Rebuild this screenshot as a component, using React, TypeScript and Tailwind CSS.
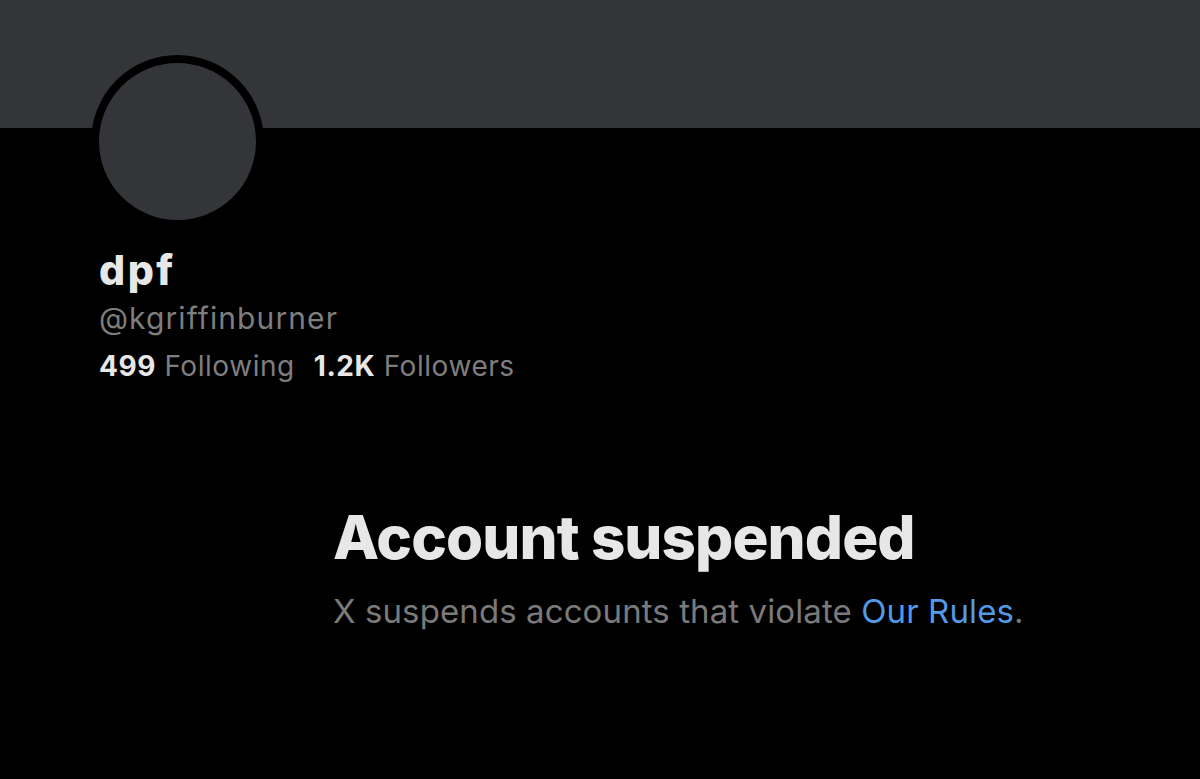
export default function App() {
  return (
    <div className="w-[1200px] h-[779px] bg-black overflow-hidden" style={{ fontFamily: "Inter, 'Noto Sans', sans-serif" }}>
      <div className="h-[128px] bg-[#343539]" />
      <div className="ml-[91px] -mt-[73px] w-[173px] h-[173px] rounded-full bg-[#343539] border-[8px] border-black" />
      <div className="pl-[99px] mt-[18px]">
        <div className="text-[41px] leading-[48px] font-extrabold text-[#e7e7e7] tracking-[2.5px]">dpf</div>
        <div className="text-[30px] leading-[40px] text-[#7e7e7e] mt-[4px] tracking-[1.1px]">@kgriffinburner</div>
        <div className="text-[28px] leading-[40px] text-[#7e7e7e] mt-[8px] tracking-[0.55px]">
          <span className="font-bold text-[#e7e7e7]">499</span> Following
          <span className="ml-[19px] font-bold text-[#e7e7e7]">1.2K</span> Followers
        </div>
      </div>
      <div className="pl-[333px] mt-[117px]">
        <div className="text-[60px] leading-[68px] font-extrabold text-[#e7e7e7] tracking-[-0.9px]">Account suspended</div>
        <div className="text-[33px] leading-[40px] text-[#7a7a7a] mt-[20px] tracking-[0.1px]">
          X suspends accounts that violate <span className="text-[#5299e6]">Our Rules</span>.
        </div>
      </div>
    </div>
  );
}
